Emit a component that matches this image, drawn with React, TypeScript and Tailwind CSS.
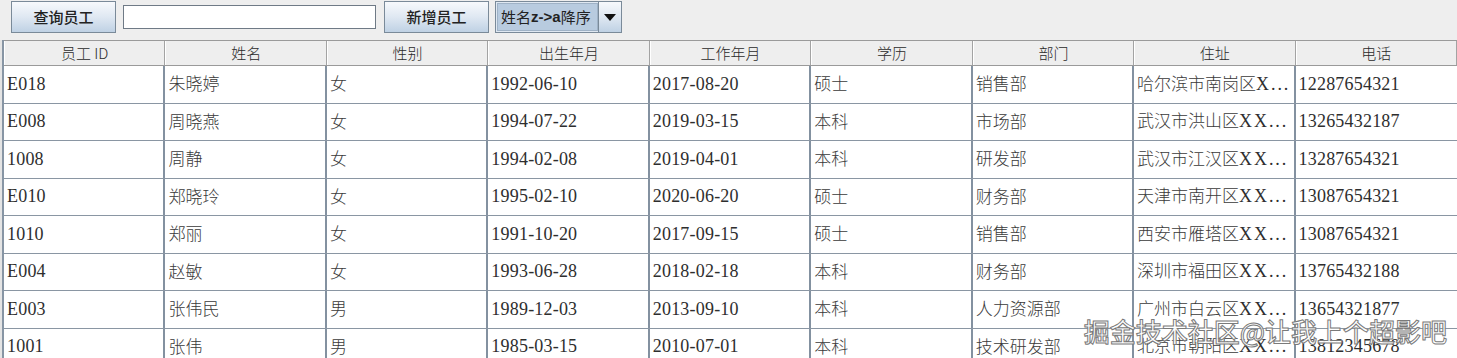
import React from "react";

const cols = ["员工 ID", "姓名", "性别", "出生年月", "工作年月", "学历", "部门", "住址", "电话"];

const rows: string[][] = [
  ["E018", "朱晓婷", "女", "1992-06-10", "2017-08-20", "硕士", "销售部", "哈尔滨市南岗区X...", "12287654321"],
  ["E008", "周晓燕", "女", "1994-07-22", "2019-03-15", "本科", "市场部", "武汉市洪山区XX...", "13265432187"],
  ["1008", "周静", "女", "1994-02-08", "2019-04-01", "本科", "研发部", "武汉市江汉区XX...", "13287654321"],
  ["E010", "郑晓玲", "女", "1995-02-10", "2020-06-20", "硕士", "财务部", "天津市南开区XX...", "13087654321"],
  ["1010", "郑丽", "女", "1991-10-20", "2017-09-15", "硕士", "销售部", "西安市雁塔区XX...", "13087654321"],
  ["E004", "赵敏", "女", "1993-06-28", "2018-02-18", "本科", "财务部", "深圳市福田区XX...", "13765432188"],
  ["E003", "张伟民", "男", "1989-12-03", "2013-09-10", "本科", "人力资源部", "广州市白云区XX...", "13654321877"],
  ["1001", "张伟", "男", "1985-03-15", "2010-07-01", "本科", "技术研发部", "北京市朝阳区XX...", "13812345678"],
];

const latinCols = new Set([0, 3, 4, 8]);

function Latin({ children }: { children: React.ReactNode }) {
  return (
    <span className="font-['Liberation_Serif',serif] text-[18px] tracking-[0.2px] text-[#2e2e2e]">{children}</span>
  );
}

function CellText({ text, col }: { text: string; col: number }) {
  let inner: React.ReactNode;
  if (latinCols.has(col)) inner = <Latin>{text}</Latin>;
  else {
    const m = text.match(/^([^\x00-\x7f]+)(.*)$/);
    if (m && m[2]) {
      inner = (
        <>
          {m[1]}
          <Latin>{m[2].split("").join("\u200A")}</Latin>
        </>
      );
    } else inner = text;
  }
  return (
    <span className="block -translate-y-[1px] font-['Noto_Sans_CJK_SC',sans-serif] text-[17px] leading-[20px] font-light text-[#3a3a3a]">
      {inner}
    </span>
  );
}

function MetalButton({ label, className }: { label: string; className?: string }) {
  return (
    <div
      className={
        "h-[32px] w-[105px] border border-[#7a8a99] bg-gradient-to-b from-[#f7f9fc] via-[#dfe8f2] to-[#bfd1e4] flex items-center justify-center text-[15px] text-[#222] font-['Noto_Sans_CJK_SC',sans-serif] font-medium " +
        (className ?? "")
      }
    >
      {label}
    </div>
  );
}

export default function App() {
  return (
    <div className="relative w-[1457px] h-[358px] overflow-hidden bg-[#eeeeee] flex flex-col">
      {/* toolbar */}
      <div className="h-[40px] flex items-start pt-[1px] pl-[11px] shrink-0">
        <MetalButton label="查询员工" />
        <div className="ml-[7px] mt-[4px] h-[24px] w-[253px] bg-white border border-[#6f7a86]" />
        <MetalButton label="新增员工" className="ml-[8px]" />
        <div className="ml-[6px] h-[32px] w-[127px] border border-[#7a8a99] flex bg-[#dfe8f2]">
          <div className="w-[101px] m-[1px] mr-0 bg-[#b8cbdf] border border-[#9fb2c6] flex items-center pl-[3px] text-[15px] text-[#222] font-['Noto_Sans_CJK_SC',sans-serif]">
            <span>姓名</span>
            <span className="font-['Liberation_Sans',sans-serif] font-bold">z-&gt;a</span>
            <span>降序</span>
          </div>
          <div className="flex-1 border-l border-[#7a8a99] bg-gradient-to-b from-[#f7f9fc] via-[#dfe8f2] to-[#bfd1e4] flex items-center justify-center">
            <svg width="12" height="7" viewBox="0 0 12 7">
              <path d="M0 0 L12 0 L6 7 Z" fill="#111" />
            </svg>
          </div>
        </div>
      </div>

      {/* table area */}
      <div className="flex flex-1 min-h-0">
        <div className="w-[4px] shrink-0 flex">
          <div className="w-[2px] bg-[#e4e4e4]" />
          <div className="w-[2px] bg-[#8795a4]" />
        </div>
        <div className="flex-1 flex flex-col min-w-0">
          {/* header */}
          <div className="h-[26px] shrink-0 grid grid-cols-9 border-t border-b border-[#9a9a9a] bg-[#eeeeee]">
            {cols.map((c) => (
              <div
                key={c}
                className="border-r border-[#a3a3a3] border-l border-l-white flex items-center justify-center text-[15px] text-[#2a2a2a] font-['Noto_Sans_CJK_SC',sans-serif] font-light"
              >
                {c}
              </div>
            ))}
          </div>
          {/* body */}
          <div className="bg-white">
            {rows.map((r, ri) => (
              <div key={ri} className="h-[37.5px] grid grid-cols-9 border-b border-[#8a96a3]">
                {r.map((cell, ci) => (
                  <div
                    key={ci}
                    className={
                      "flex items-center overflow-hidden whitespace-nowrap pl-[3px] " +
                      (ci < 8 ? "border-r-2 border-[#8391a0]" : "")
                    }
                  >
                    <CellText text={cell} col={ci} />
                  </div>
                ))}
              </div>
            ))}
          </div>
        </div>
      </div>

      {/* watermark */}
      <div className="absolute right-[10px] bottom-[14px] text-[26px] leading-none text-white/90 font-['Noto_Sans_CJK_SC',sans-serif] font-medium [-webkit-text-stroke:1px_#7a7a7a]">
        掘金技术社区@让我上个超影吧
      </div>
    </div>
  );
}
